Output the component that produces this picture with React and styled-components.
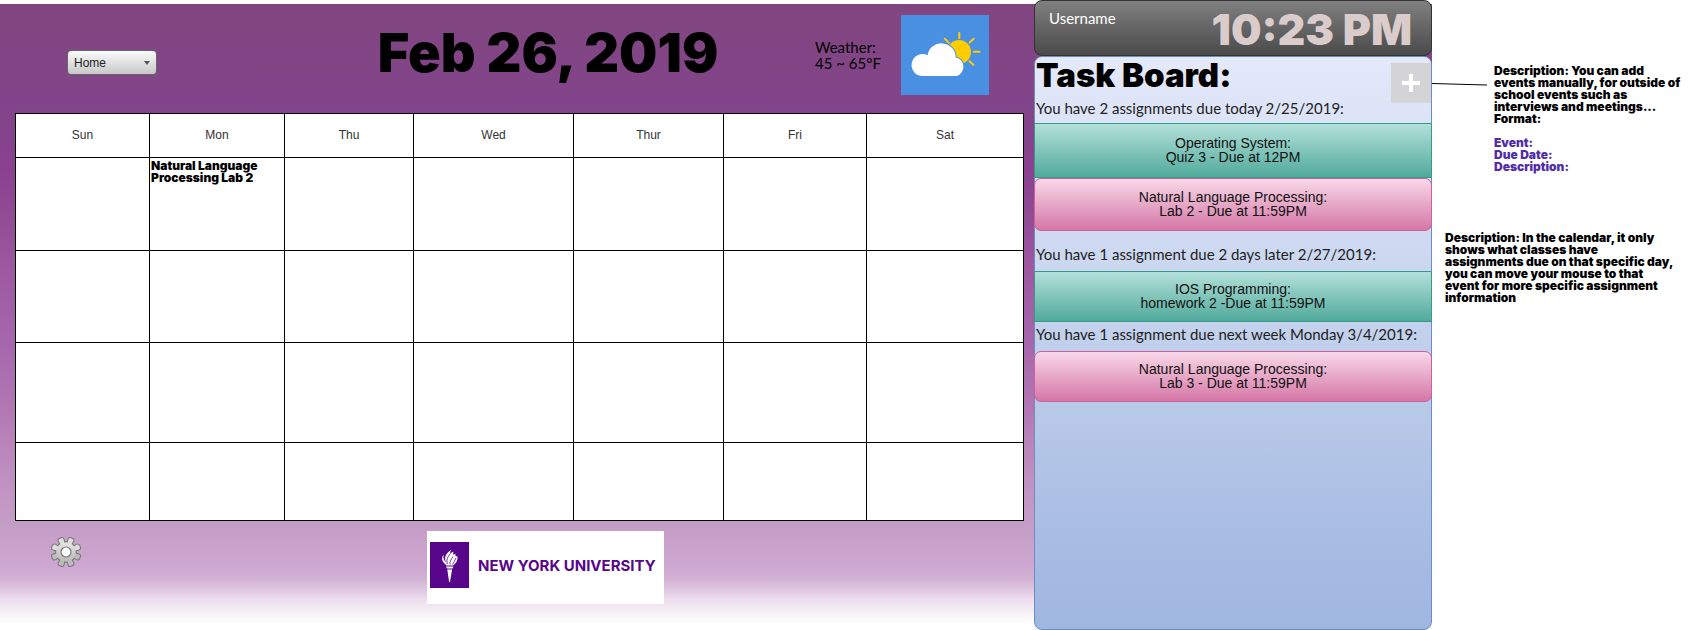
import React from "react";
import styled, { createGlobalStyle } from "styled-components";

const heavy = `"Inter", "Liberation Sans", sans-serif`;
const humanist = `"Lato", "Open Sans", sans-serif`;
const plain = `"Liberation Sans", Arial, sans-serif`;

const GlobalStyle = createGlobalStyle`
  *, *::before, *::after { box-sizing: border-box; }
  body { margin: 0; background: #fff; font-family: ${plain}; color: #000; }
  h1, h2, p { margin: 0; }
`;

const Page = styled.div`
  display: flex;
  min-height: 100vh;
`;

const Workspace = styled.div`
  flex: 1;
  min-width: 0;
  display: flex;
  margin-top: 4px;
  background: linear-gradient(
    #814680 0%, #82448a 17%, #8a418f 27%, #914a94 33%, #9c58a1 42%,
    #a668ac 55%, #b276b3 64%, #c295c4 78%, #c49ec6 84%, #cea8d2 90%,
    #d2b3d4 92%, #e2cce5 94%, #ecdcec 95%, #f5f0f5 97%, #fff 99%
  );
`;

const Main = styled.main`
  flex: 1;
  min-width: 0;
  display: flex;
  flex-direction: column;
`;

const Header = styled.header`
  display: grid;
  grid-template-columns: 214px 1fr auto;
  align-items: center;
  height: 109px;
  padding: 0 45px 8px 67px;
`;

const NavPicker = styled.label`
  position: relative;
  width: 90px;
  height: 25px;
  margin-top: 16px;
`;

const NavSelect = styled.select`
  appearance: none;
  width: 100%;
  height: 100%;
  padding: 0 20px 0 6px;
  border: 1px solid #666;
  border-radius: 4px;
  background: linear-gradient(#fafafa, #c8c8c8);
  color: #222;
  font: 12px ${plain};
`;

const Caret = styled.svg`
  position: absolute;
  right: 7px;
  top: 11px;
  pointer-events: none;
`;

const Today = styled.h1`
  padding-bottom: 4px;
  text-align: center;
  white-space: nowrap;
  font: 900 54px/60px ${heavy};
`;

const Weather = styled.div`
  display: flex;
  align-items: center;
  gap: 24px;
`;

const Forecast = styled.p`
  width: 62px;
  white-space: nowrap;
  font: 15px/16px ${humanist};
`;

const Calendar = styled.table`
  width: calc(100% - 25px);
  margin: 0 10px 0 15px;
  table-layout: fixed;
  border-collapse: collapse;
  background: #fff;
`;

const Day = styled.th`
  height: 44px;
  padding: 0 0 2px;
  border: 1px solid #000;
  color: #333;
  font: 12px ${plain};
`;

const Week = styled.tr`
  height: ${(p) => p.$height}px;
`;

const Cell = styled.td`
  padding: 2px 1px;
  border: 1px solid #000;
  vertical-align: top;
  white-space: nowrap;
  font: 900 12px/12px ${heavy};
`;

const Footer = styled.footer`
  flex: 1;
  display: grid;
  grid-template-columns: 1fr auto 1fr;
  align-items: start;
  padding: 10px 0 25px 57px;
`;

const IconButton = styled.button`
  justify-self: start;
  width: 32px;
  height: 32px;
  margin-top: 5px;
  margin-left: -7px;
  padding: 0;
  border: 0;
  background: none;
  svg { display: block; }
`;

const School = styled.a`
  display: flex;
  align-items: center;
  gap: 9px;
  width: 237px;
  height: 73px;
  padding: 0 3px 5px;
  background: #fff;
  color: #57068c;
  text-decoration: none;
  white-space: nowrap;
  font: 700 15px ${heavy};
`;

const Sidebar = styled.aside`
  width: 398px;
  margin-top: -4px;
  display: flex;
  flex-direction: column;
`;

const UserBar = styled.div`
  display: flex;
  justify-content: space-between;
  height: 56px;
  padding: 0 19px 0 14px;
  border: 1px solid #333;
  border-radius: 8px;
  background: linear-gradient(#808080, #4a4a4a);
`;

const Username = styled.span`
  padding-top: 9px;
  color: #fff;
  font: 15px/16px ${humanist};
`;

const Clock = styled.time`
  color: #d9ccca;
  white-space: nowrap;
  font: 900 43px/56px ${heavy};
`;

const Board = styled.section`
  flex: 1;
  display: flex;
  flex-direction: column;
  border: 1px solid #6c8ebf;
  border-radius: 8px;
  background: linear-gradient(#e4e9fa, #ccd8f0 35%, #b8c9e8 62%, #a8bbe3 85%, #9fb7e0);
`;

const BoardTop = styled.div`
  display: flex;
  justify-content: space-between;
  height: 36px;
  margin-top: 6px;
  padding-left: 1px;
`;

const BoardTitle = styled.h2`
  white-space: nowrap;
  font: 900 33px/24px ${heavy};
`;

const AddButton = styled.button`
  width: 40px;
  height: 40px;
  padding: 0;
  border: 0;
  background: #d4d4d6;
  svg { display: block; }
`;

const DueLabel = styled.p`
  height: ${(p) => p.$height}px;
  padding: ${(p) => p.$lead}px 1px 0;
  color: #222;
  white-space: nowrap;
  font: 15px/18px ${humanist};
`;

const tones = {
  green: { line: "#359b87", fill: "linear-gradient(#b3e0da, #51aa9b)", radius: 0 },
  pink: { line: "#cf5f98", fill: "linear-gradient(#f8d8e8, #d577a6)", radius: 7 },
};

const Task = styled.article`
  display: flex;
  align-items: center;
  justify-content: center;
  height: ${(p) => p.$height}px;
  margin: 0 -1px;
  padding-bottom: 2px;
  border: 1px solid ${(p) => tones[p.$tone].line};
  border-radius: ${(p) => tones[p.$tone].radius}px;
  background: ${(p) => tones[p.$tone].fill};
  color: #111;
  text-align: center;
  font: 14px/14px ${plain};
`;

const Notes = styled.aside`
  width: 270px;
  display: flex;
  flex-direction: column;
  gap: 59px;
  padding-top: 65px;
`;

const Note = styled.div`
  display: flex;
  padding-left: ${(p) => (p.$inset ? 13 : 0)}px;
  white-space: nowrap;
  font: 900 12px/12px ${heavy};
`;

const Pointer = styled.svg`
  flex: none;
  margin: 17px 6px 0 0;
`;

const Fields = styled.p`
  margin-top: 12px;
  color: #512da8;
`;

const days = [
  ["Sun", 134], ["Mon", 135], ["Thu", 129], ["Wed", 160],
  ["Thur", 150], ["Fri", 143], ["Sat", 157],
];

const weeks = [
  { height: 93, events: { Mon: ["Natural Language", "Processing Lab 2"] } },
  { height: 92, events: {} },
  { height: 100, events: {} },
  { height: 78, events: {} },
];

const board = [
  {
    label: "You have 2 assignments due today 2/25/2019:", space: 24, lead: 0,
    tasks: [
      { tone: "green", height: 55, course: "Operating System:", due: "Quiz 3 - Due at 12PM" },
      { tone: "pink", height: 53, course: "Natural Language Processing:", due: "Lab 2 - Due at 11:59PM" },
    ],
  },
  {
    label: "You have 1 assignment due 2 days later 2/27/2019:", space: 40, lead: 14,
    tasks: [{ tone: "green", height: 51, course: "IOS Programming:", due: "homework 2 -Due at 11:59PM" }],
  },
  {
    label: "You have 1 assignment due next week Monday 3/4/2019:", space: 29, lead: 3,
    tasks: [{ tone: "pink", height: 51, course: "Natural Language Processing:", due: "Lab 3 - Due at 11:59PM" }],
  },
];

function WeatherIcon() {
  return (
    <svg width="88" height="80" viewBox="0 0 88 80" role="img" aria-label="Partly cloudy">
      <rect width="88" height="80" fill="#4a90e2" />
      <circle cx="58" cy="37" r="12" fill="#ffcc00" />
      <path
        d="M58.3 18v5.2M72.8 36.7h5.8M68.6 27.6l4-3.8M68.6 46.2l3.8 3.7M43.8 23.8l4 3.8"
        stroke="#ffcc00" strokeWidth="2" strokeLinecap="round"
      />
      <path
        d="M22.5 61a11 11 0 1 1 4-20.8a14.2 14.2 0 0 1 28.2 2.2a9.6 9.6 0 0 1 1 18.6z"
        fill="#fff" stroke="#4a90e2" strokeWidth="2" paintOrder="stroke"
      />
    </svg>
  );
}

const teeth = [22.5, 67.5, 112.5, 157.5, 202.5, 247.5, 292.5, 337.5];
const tooth = "M-1.9 -8 L-2.6 -13 Q-2.6 -14.6 -1 -14.6 H1 Q2.6 -14.6 2.6 -13 L1.9 -8z";

function GearIcon() {
  return (
    <svg width="32" height="32" viewBox="-16 -16 32 32" aria-hidden="true">
      <defs>
        <linearGradient id="metal" gradientUnits="userSpaceOnUse" x1="0" y1="-15" x2="0" y2="15">
          <stop offset="0" stopColor="#f2f2f2" />
          <stop offset="1" stopColor="#adadad" />
        </linearGradient>
      </defs>
      {teeth.map((a) => (
        <path key={a} d={tooth} transform={`rotate(${a})`} fill="none" stroke="#777" strokeWidth="2" />
      ))}
      <circle r="9.8" fill="#d0d0d0" stroke="#777" strokeWidth="2" />
      {teeth.map((a) => (
        <path key={a} d={tooth} transform={`rotate(${a})`} fill={a > 90 && a < 270 ? "#bcbcbc" : "#dedede"} />
      ))}
      <circle r="9.8" fill="url(#metal)" />
      <circle r="5" fill="#fff" stroke="#777" strokeWidth="1.2" />
    </svg>
  );
}

function TorchLogo() {
  return (
    <svg width="39" height="46" viewBox="0 0 39 46" aria-hidden="true">
      <rect width="39" height="46" fill="#57068c" />
      <path
        d="M15 22C11.5 19 11.5 15.5 13.5 12.5C13 16 14 18.5 16 20.5C14 15.5 15.5 11.5 21 8C19.5 11.5 20 13 21.5 10.5C22.5 9.5 23.3 9.6 23.5 10C22.5 12.5 23.5 13.5 25.5 11.5C25 13.5 25.5 14.5 27.5 14.5C28 18.5 26 21.5 23 23.5H16.5z"
        fill="#fff"
      />
      <path d="M17.2 22C16.2 17.5 17.8 14.5 20 12M20 22.5C19.5 19.5 21.5 17 23 14.5M22.5 22.5C23.8 20.5 25 18.5 26 16" fill="none" stroke="#57068c" strokeWidth="0.8" />
      <path d="M16 24.5h7.5l-1 2h-5.5zM17.3 27.5h4.8L20 40h-.9z" fill="#fff" />
    </svg>
  );
}

export default function App() {
  return (
    <>
      <GlobalStyle />
      <Page>
        <Workspace>
          <Main>
            <Header>
              <NavPicker>
                <NavSelect aria-label="Page" defaultValue="Home">
                  <option>Home</option>
                </NavSelect>
                <Caret width="6" height="4" viewBox="0 0 6 4"><path d="M0 0h6L3 4z" fill="#555" /></Caret>
              </NavPicker>
              <Today>Feb 26, 2019</Today>
              <Weather>
                <Forecast>Weather:<br />45 ~ 65°F</Forecast>
                <WeatherIcon />
              </Weather>
            </Header>
            <Calendar>
              <colgroup>
                {days.map(([name, width]) => <col key={name} width={width} />)}
              </colgroup>
              <thead>
                <tr>{days.map(([name]) => <Day key={name} scope="col">{name}</Day>)}</tr>
              </thead>
              <tbody>
                {weeks.map((week, i) => (
                  <Week key={i} $height={week.height}>
                    {days.map(([name]) => (
                      <Cell key={name}>
                        {(week.events[name] || []).map((line) => <div key={line}>{line}</div>)}
                      </Cell>
                    ))}
                  </Week>
                ))}
              </tbody>
            </Calendar>
            <Footer>
              <IconButton aria-label="Settings"><GearIcon /></IconButton>
              <School href="#nyu"><TorchLogo />NEW YORK UNIVERSITY</School>
            </Footer>
          </Main>
          <Sidebar>
            <UserBar>
              <Username>Username</Username>
              <Clock>10:23 PM</Clock>
            </UserBar>
            <Board>
              <BoardTop>
                <BoardTitle>Task Board:</BoardTitle>
                <AddButton aria-label="Add event">
                  <svg width="40" height="40" viewBox="0 0 40 40"><path d="M20 11v18M11 20h18" stroke="#fff" strokeWidth="4" /></svg>
                </AddButton>
              </BoardTop>
              {board.map((group) => (
                <React.Fragment key={group.label}>
                  <DueLabel $height={group.space} $lead={group.lead}>{group.label}</DueLabel>
                  {group.tasks.map((task) => (
                    <Task key={task.due} $tone={task.tone} $height={task.height}>
                      <p>{task.course}<br />{task.due}</p>
                    </Task>
                  ))}
                </React.Fragment>
              ))}
            </Board>
          </Sidebar>
        </Workspace>
        <Notes>
          <Note>
            <Pointer width="56" height="4" viewBox="0 0 56 4"><path d="M0 1.5L55 3" stroke="#000" /></Pointer>
            <div>
              <p>
                Description: You can add<br />events manually, for outside of<br />school events such as<br />
                interviews and meetings...<br />Format:
              </p>
              <Fields>Event:<br />Due Date:<br />Description:</Fields>
            </div>
          </Note>
          <Note $inset>
            <p>
              Description: In the calendar, it only<br />shows what classes have<br />
              assignments due on that specific day,<br />you can move your mouse to that<br />
              event for more specific assignment<br />information
            </p>
          </Note>
        </Notes>
      </Page>
    </>
  );
}
